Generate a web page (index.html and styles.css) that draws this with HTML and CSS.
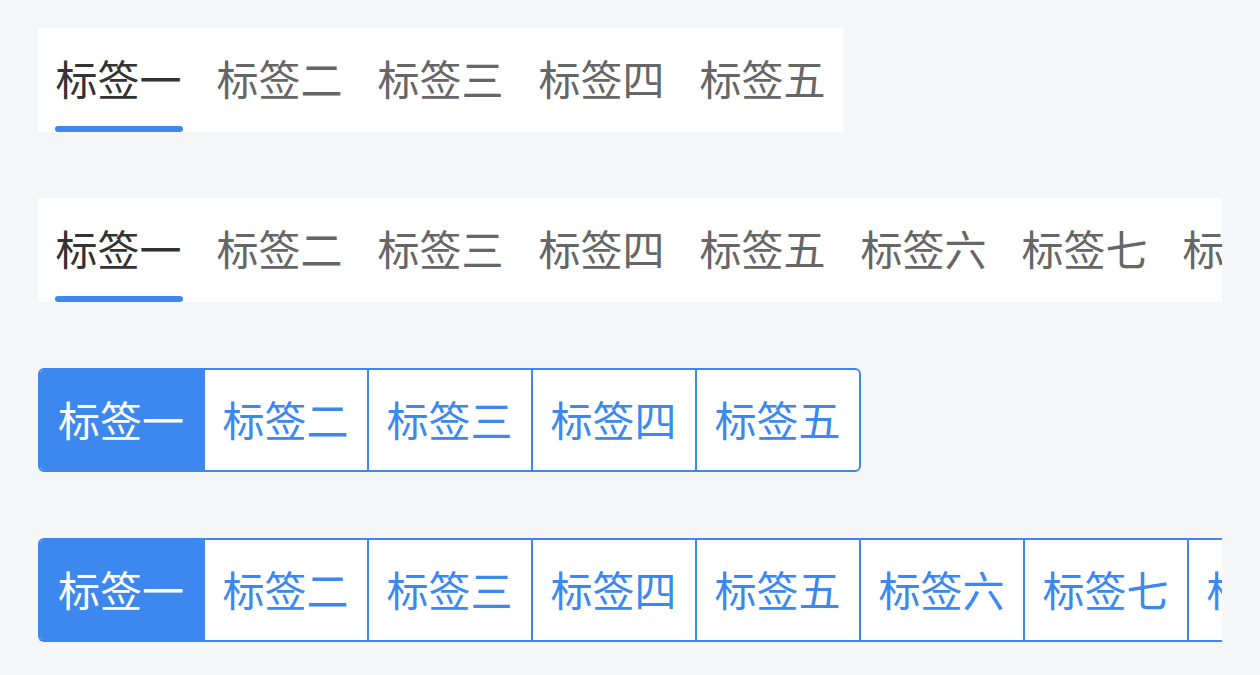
FILE: index.html
```html
<!DOCTYPE html>
<html lang="zh-CN">
<head>
    <meta charset="UTF-8">
    <meta name="viewport" content="width=device-width, initial-scale=1.0">
    <title>标签页</title>
    <link rel="stylesheet" href="styles.css">
</head>
<body>
    <div class="page">
        <!-- underline tabs, few items -->
        <div class="tabs tabs-fit">
            <div class="tab active">标签一</div>
            <div class="tab">标签二</div>
            <div class="tab">标签三</div>
            <div class="tab">标签四</div>
            <div class="tab">标签五</div>
        </div>

        <!-- underline tabs, scrolling -->
        <div class="tabs tabs-scroll">
            <div class="tab active">标签一</div>
            <div class="tab">标签二</div>
            <div class="tab">标签三</div>
            <div class="tab">标签四</div>
            <div class="tab">标签五</div>
            <div class="tab">标签六</div>
            <div class="tab">标签七</div>
            <div class="tab">标签八</div>
        </div>

        <!-- segmented tabs, few items -->
        <div class="segments segments-fit">
            <div class="seg active">标签一</div>
            <div class="seg">标签二</div>
            <div class="seg">标签三</div>
            <div class="seg">标签四</div>
            <div class="seg">标签五</div>
        </div>

        <!-- segmented tabs, scrolling -->
        <div class="segments segments-scroll">
            <div class="seg active">标签一</div>
            <div class="seg">标签二</div>
            <div class="seg">标签三</div>
            <div class="seg">标签四</div>
            <div class="seg">标签五</div>
            <div class="seg">标签六</div>
            <div class="seg">标签七</div>
            <div class="seg">标签八</div>
        </div>
    </div>
</body>
</html>
```

FILE: styles.css
```css
body {
    margin: 0;
    background-color: #f5f6f8;
    font-family: "Noto Sans CJK SC", "Noto Sans", sans-serif;
}
.page {
    display: flex;
    flex-direction: column;
    align-items: flex-start;
    gap: 66px;
    padding: 28px 38px;
}

/* underline tabs */
.tabs {
    display: flex;
    height: 104px;
    background-color: #fff;
    overflow: hidden;
}
.tabs-scroll {
    align-self: stretch;
}
.tab {
    position: relative;
    flex-shrink: 0;
    padding: 0 17.5px;
    font-size: 42px;
    line-height: 100px;
    color: #666;
    white-space: nowrap;
}
.tab.active {
    color: #333;
}
.tab.active::after {
    content: "";
    position: absolute;
    left: 17px;
    right: 16px;
    bottom: 0;
    height: 6px;
    border-radius: 3px;
    background-color: #3d88ee;
}

/* segmented tabs */
.segments {
    display: flex;
    height: 104px;
    box-sizing: border-box;
    border: 2px solid #3d88ee;
    border-radius: 6px;
    background-color: #fff;
    overflow: hidden;
}
.segments-scroll {
    align-self: stretch;
    border-right: none;
    border-radius: 6px 0 0 6px;
}
.seg {
    flex-shrink: 0;
    padding: 0 18px;
    font-size: 42px;
    line-height: 98px;
    color: #3d88ee;
    white-space: nowrap;
}
.seg + .seg {
    border-left: 2px solid #3d88ee;
}
.seg.active {
    padding-right: 18.5px;
    background-color: #3d88ee;
    color: #fff;
}
```
